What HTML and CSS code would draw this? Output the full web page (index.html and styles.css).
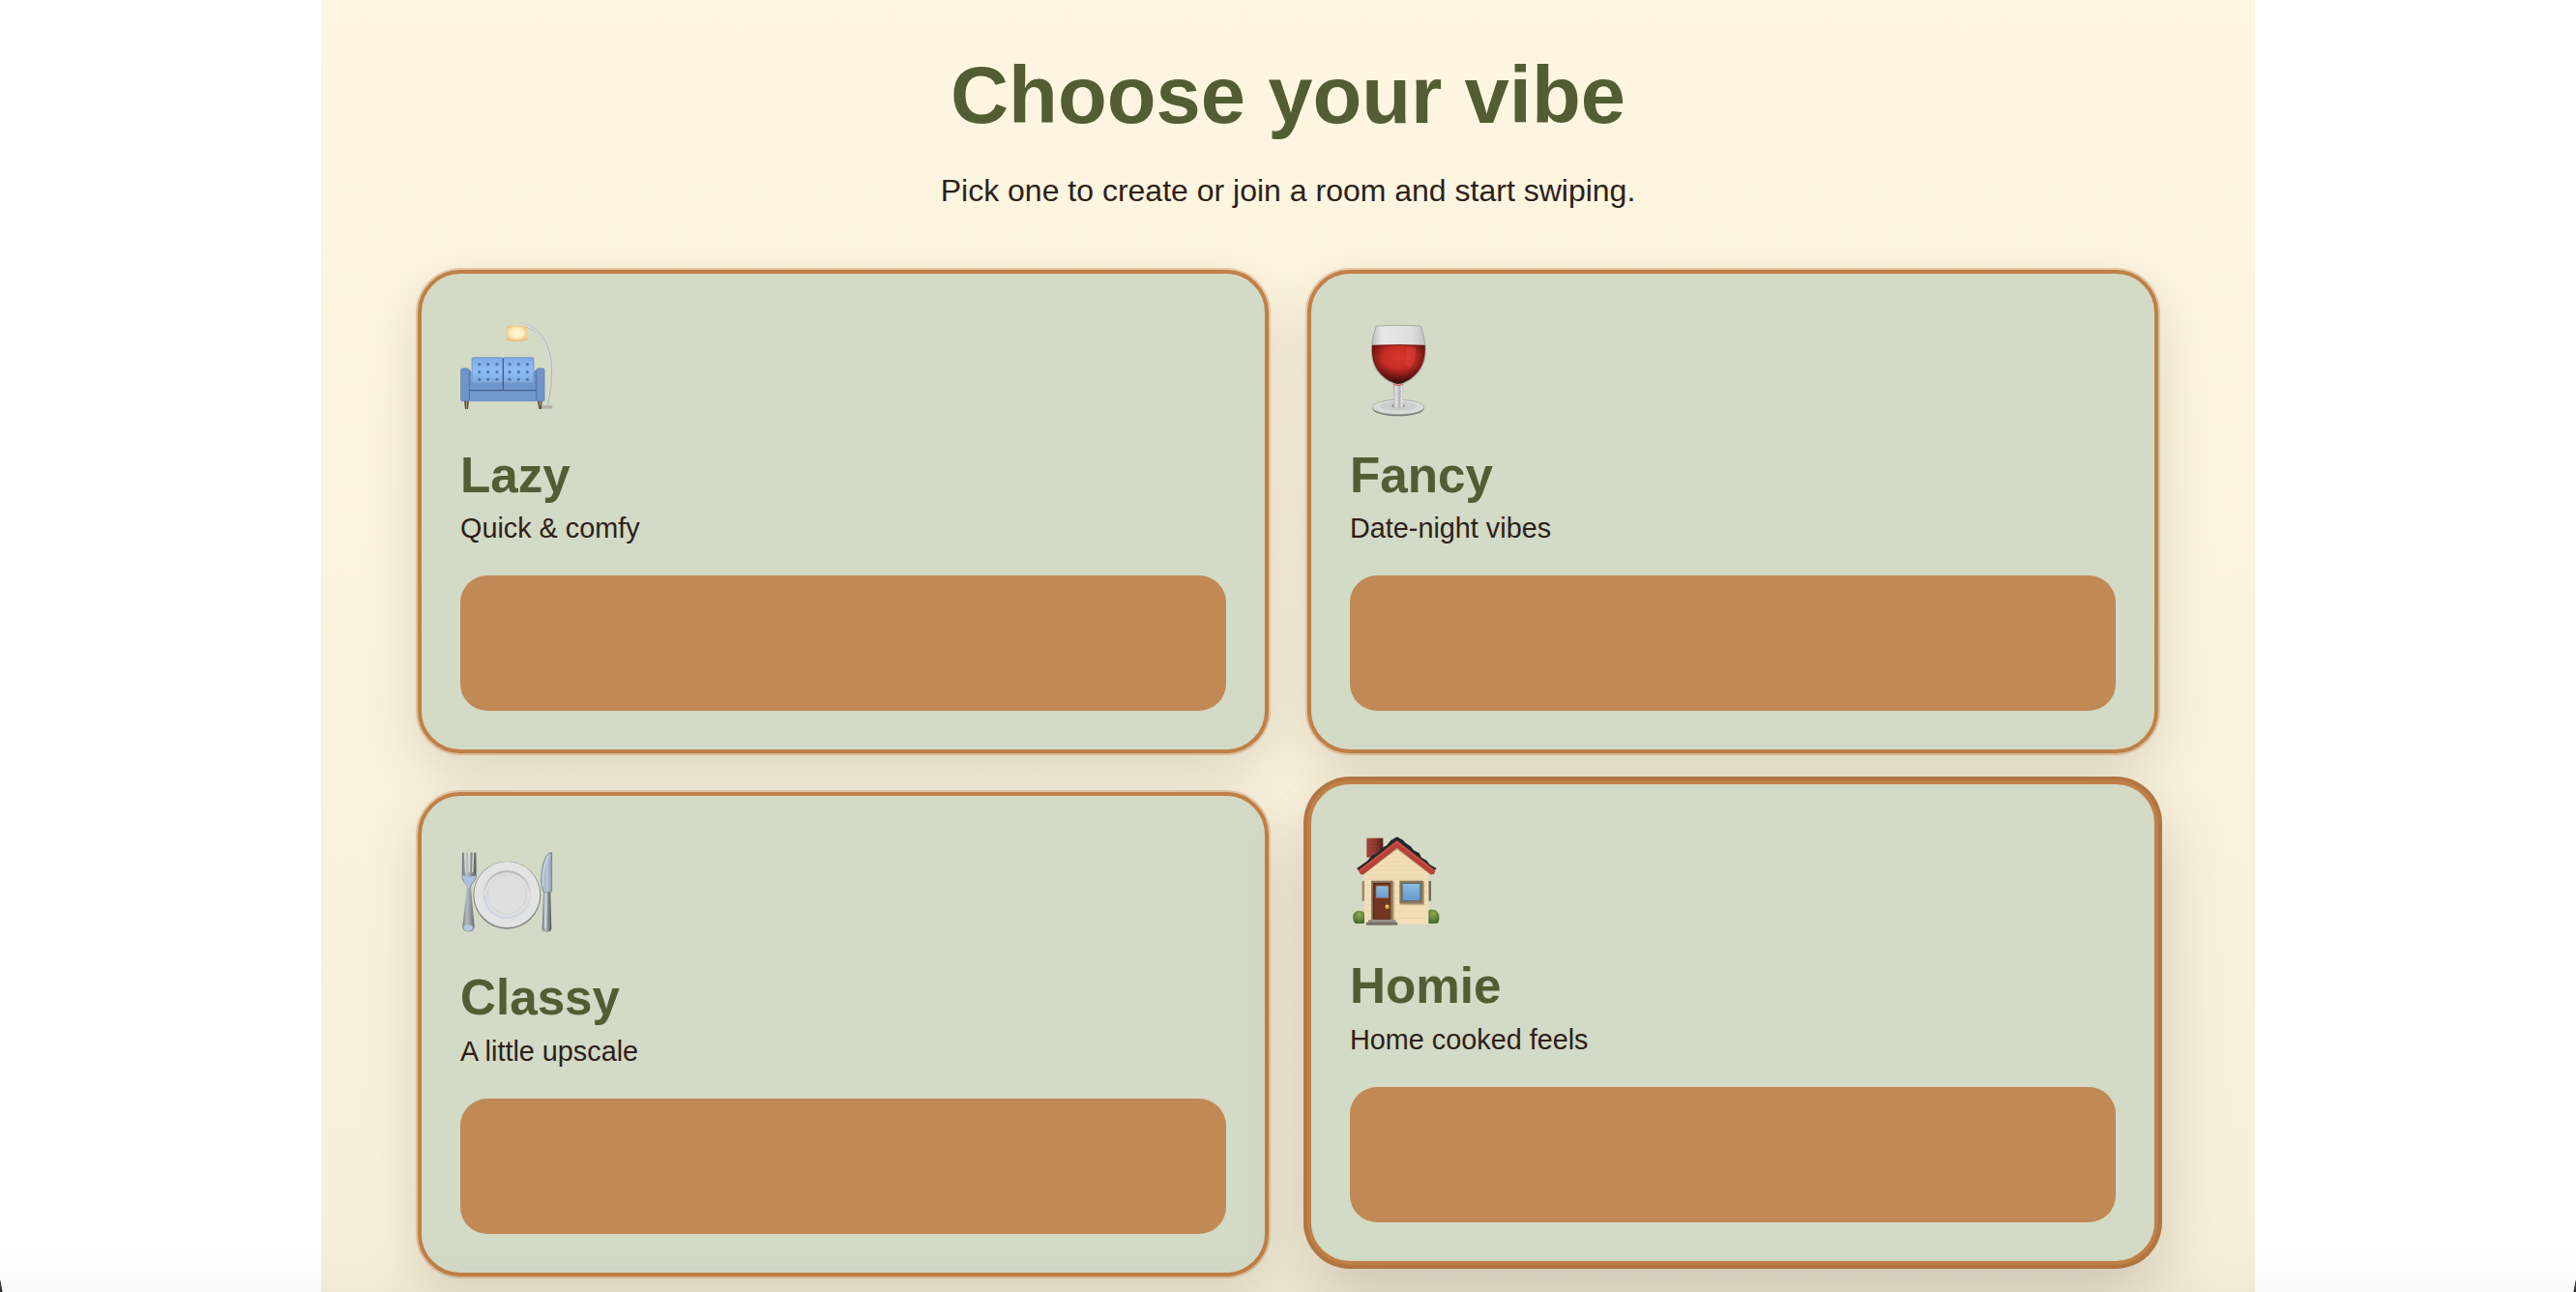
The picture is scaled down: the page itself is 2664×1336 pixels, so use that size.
FILE: index.html
```html
<!DOCTYPE html>
<html lang="en">
<head>
    <meta charset="UTF-8">
    <meta name="viewport" content="width=device-width, initial-scale=1.0">
    <title>Choose your vibe</title>
    <link rel="stylesheet" href="styles.css">
</head>

<body>
    <main class="page">
        <h1 class="title">Choose your vibe</h1>
        <p class="subtitle">Pick one to create or join a room and start swiping.</p>

        <div class="grid">
            <article class="card">
                <svg class="icon" viewBox="48 72 288 288" aria-hidden="true">
                    <defs>
                        <linearGradient id="cushion" x1="0" y1="0" x2="0" y2="1">
                            <stop offset="0" stop-color="#7eabe4"/>
                            <stop offset=".5" stop-color="#8fbdf5"/>
                            <stop offset="1" stop-color="#7ba6de"/>
                        </linearGradient>
                        <radialGradient id="shade">
                            <stop offset="0" stop-color="#fffbd8"/>
                            <stop offset=".6" stop-color="#fdeebb"/>
                            <stop offset="1" stop-color="#f0c98c"/>
                        </radialGradient>
                    </defs>
                    <path d="M225 78C285 74 328 135 329 215C329 265 324 300 314 333" fill="none" stroke="#b3b5b5" stroke-width="8"/>
                    <path d="M225 77C284 73 326 135 327 215C327 265 322 300 312 333" fill="none" stroke="#dcdfdf" stroke-width="5"/>
                    <rect x="296" y="328" width="38" height="10" rx="3" fill="#b7b0aa"/>
                    <path d="M192 81Q223 77 254 81L256 124Q223 132 190 124Z" fill="url(#shade)"/>
                    <path d="M190 120Q223 127 256 120V125Q223 132 190 125Z" fill="#e8bd80"/>
                    <path d="M60 313h6l2 26h-5zM68 313h7l-3 26h-3zM287 313h6l3 26h-4zM296 313h6l-2 26h-4z" fill="#674a3b"/>
                    <rect x="84" y="179" width="97" height="85" rx="5" fill="url(#cushion)" stroke="#6488bd" stroke-width="2"/>
                    <rect x="182" y="179" width="94" height="85" rx="5" fill="url(#cushion)" stroke="#6488bd" stroke-width="2"/>
                    <g fill="#5577ad">
                        <circle cx="107" cy="200" r="5"/><circle cx="134" cy="200" r="5"/><circle cx="162" cy="200" r="5"/>
                        <circle cx="107" cy="224" r="5"/><circle cx="134" cy="224" r="5"/><circle cx="162" cy="224" r="5"/>
                        <circle cx="107" cy="247" r="5"/><circle cx="134" cy="247" r="5"/><circle cx="162" cy="247" r="5"/>
                        <circle cx="201" cy="200" r="5"/><circle cx="229" cy="200" r="5"/><circle cx="256" cy="200" r="5"/>
                        <circle cx="201" cy="224" r="5"/><circle cx="229" cy="224" r="5"/><circle cx="256" cy="224" r="5"/>
                        <circle cx="201" cy="247" r="5"/><circle cx="229" cy="247" r="5"/><circle cx="256" cy="247" r="5"/>
                    </g>
                    <rect x="76" y="255" width="208" height="29" fill="#7095ca"/>
                    <path d="M77 255H180M184 255H282" stroke="#8db4e6" stroke-width="2"/>
                    <path d="M77 281H284M181 181V281" stroke="#425f8e" stroke-width="4"/>
                    <rect x="76" y="284" width="209" height="30" rx="3" fill="#7599cf" stroke="#5c7fb6" stroke-width="2"/>
                    <path d="M50 217Q50 213 55 213H71L81 222V255L76 258V310Q76 314 71 314H54Q50 314 50 310Z" fill="#7095ca" stroke="#5879ad" stroke-width="2"/>
                    <path d="M309 217Q309 213 304 213H289L278 222V255L283 258V310Q283 314 288 314H305Q309 314 309 310Z" fill="#7095ca" stroke="#5879ad" stroke-width="2"/>
                    <path d="M76 221V310M284 221V310" stroke="#5475aa" stroke-width="3"/>
                </svg>
                <h2 class="name">Lazy</h2>
                <p class="desc">Quick &amp; comfy</p>
                <div class="action"></div>
            </article>

            <article class="card">
                <svg class="icon" viewBox="18 42 288 288" aria-hidden="true">
                    <defs>
                        <radialGradient id="wine" cx=".5" cy=".32" r=".66">
                            <stop offset="0" stop-color="#d8382d"/>
                            <stop offset=".45" stop-color="#c42c24"/>
                            <stop offset=".75" stop-color="#741815"/>
                            <stop offset="1" stop-color="#350e0d"/>
                        </radialGradient>
                        <linearGradient id="glass">
                            <stop offset="0" stop-color="#bfc0bf"/>
                            <stop offset=".2" stop-color="#e8e8e8"/>
                            <stop offset=".75" stop-color="#dededf"/>
                            <stop offset="1" stop-color="#c2c2c3"/>
                        </linearGradient>
                        <linearGradient id="stem">
                            <stop offset="0" stop-color="#8e8e8d"/>
                            <stop offset=".3" stop-color="#e6e6e6"/>
                            <stop offset=".6" stop-color="#b3b3b3"/>
                            <stop offset=".8" stop-color="#e8e8e8"/>
                            <stop offset="1" stop-color="#8a8a89"/>
                        </linearGradient>
                    </defs>
                    <ellipse cx="168" cy="307" rx="80" ry="24" fill="#777a75"/>
                    <ellipse cx="168" cy="303" rx="80" ry="23" fill="#d9dbd9" stroke="#9b9d99" stroke-width="2"/>
                    <ellipse cx="168" cy="300" rx="58" ry="14" fill="#cccecc"/>
                    <ellipse cx="168" cy="299" rx="20" ry="7" fill="#8c8c8b"/>
                    <path d="M152 225H184L182 285Q182 300 187 303Q168 309 150 303Q155 298 155 285Z" fill="url(#stem)"/>
                    <path d="M100 51Q168 47 237 51Q247 76 252 112C256 166 236 207 184 230Q168 238 152 230C101 207 82 166 86 112Q90 76 100 51Z" fill="url(#glass)" stroke="#8d8f8b" stroke-width="2"/>
                    <path d="M87 111Q168 108 251 111C255 164 234 206 183 228Q168 234 154 228C102 206 83 164 87 111Z" fill="url(#wine)"/>
                    <path d="M88 112Q168 109 250 112" fill="none" stroke="#7c1a17" stroke-width="3"/>
                    <path d="M195 117H222Q224 155 207 181Q195 180 190 174Z" fill="#ee5144" opacity=".3"/>
                    <path d="M155 230Q168 237 182 230V234Q168 240 155 234Z" fill="#d55"/>
                </svg>
                <h2 class="name">Fancy</h2>
                <p class="desc">Date-night vibes</p>
                <div class="action"></div>
            </article>

            <article class="card">
                <svg class="icon" viewBox="48 27 288 288" aria-hidden="true">
                    <defs>
                        <linearGradient id="metal">
                            <stop offset="0" stop-color="#6e7276"/>
                            <stop offset=".35" stop-color="#b9c0c8"/>
                            <stop offset=".65" stop-color="#8a8d92"/>
                            <stop offset="1" stop-color="#55585c"/>
                        </linearGradient>
                        <linearGradient id="blade">
                            <stop offset="0" stop-color="#a5b3c3"/>
                            <stop offset=".6" stop-color="#b8c5d3"/>
                            <stop offset="1" stop-color="#8798ab"/>
                        </linearGradient>
                        <linearGradient id="rim" x1="0" y1="0" x2="0" y2="1">
                            <stop offset="0" stop-color="#b9b5b2"/>
                            <stop offset=".5" stop-color="#dcdcdd"/>
                            <stop offset="1" stop-color="#c9d3e2"/>
                        </linearGradient>
                    </defs>
                    <circle cx="193" cy="182" r="105" fill="#85888a"/>
                    <circle cx="193" cy="180" r="102" fill="#e4e3e3"/>
                    <circle cx="193" cy="180" r="75" fill="url(#rim)"/>
                    <circle cx="193" cy="181" r="69" fill="#e0e0e1"/>
                    <path d="M121 181A72 72 0 0 0 193 253A72 72 0 0 0 250 225A68 68 0 0 1 127 181Z" fill="#c6d2e6"/>
                    <circle cx="193" cy="180" r="60" fill="#e0dfdf" stroke="#cacacb" stroke-width="2"/>
                    <path d="M54 51Q57 46 60 51L63 112H67L66 51Q69 46 72 51L73 112H78L79 51Q83 46 86 51L84 112H88L91 51Q95 46 97 51L98 127Q94 139 83 150L81 161L92 279Q91 296 73 296Q55 296 55 279L68 161L66 150Q54 139 53 127Z" fill="url(#metal)"/>
                    <path d="M54 121Q75 128 97 121Q96 136 80 149L76 160H72L68 149Q55 138 54 121Z" fill="#acc2df"/>
                    <path d="M73 161L70 219L68 274" fill="none" stroke="#abb2bb" stroke-width="5"/>
                    <ellipse cx="73" cy="283" rx="14" ry="9" fill="#b6c9e2"/>
                    <path d="M332 50C313 45 300 92 299 135Q299 159 306 173H328Q332 173 332 167Z" fill="url(#blade)" stroke="#66727f" stroke-width="2"/>
                    <path d="M326 58C312 70 303 111 304 155" fill="none" stroke="#d9e3ed" stroke-width="3"/>
                    <path d="M306 173H328L331 286Q329 297 316 297Q303 297 302 286Z" fill="url(#metal)"/>
                    <path d="M314 175L312 284" stroke="#c6d2df" stroke-width="7"/>
                </svg>
                <h2 class="name">Classy</h2>
                <p class="desc">A little upscale</p>
                <div class="action"></div>
            </article>

            <article class="card card-active">
                <svg class="icon" viewBox="33 36 288 288" aria-hidden="true">
                    <defs>
                        <linearGradient id="brick">
                            <stop offset="0" stop-color="#a4483d"/>
                            <stop offset=".5" stop-color="#963a31"/>
                            <stop offset="1" stop-color="#571e1b"/>
                        </linearGradient>
                        <linearGradient id="pane" x1="0" y1="0" x2="0" y2="1">
                            <stop offset="0" stop-color="#8bbde2"/>
                            <stop offset="1" stop-color="#6799cf"/>
                        </linearGradient>
                        <radialGradient id="bush" cx=".5" cy=".3" r=".6">
                            <stop offset="0" stop-color="#8dab4f"/>
                            <stop offset="1" stop-color="#4a7232"/>
                        </radialGradient>
                    </defs>
                    <path d="M43 295Q43 275 62 275Q78 275 82 290V315H51Q43 310 43 295Z" fill="url(#bush)"/>
                    <path d="M274 275Q292 267 303 277Q312 286 310 303Q308 315 300 315H274Z" fill="url(#bush)"/>
                    <rect x="71" y="183" width="7" height="62" fill="#9c8665"/>
                    <rect x="277" y="183" width="8" height="62" fill="#766b51"/>
                    <path d="M85 50H136V110H85Z" fill="url(#brick)"/>
                    <path d="M85 60H134M85 70H134M85 80H134M85 90H134" stroke="#7c2f29" stroke-width="1"/>
                    <path d="M78 148L179 78L277 148V317H78Z" fill="#f2dfb8"/>
                    <path d="M166 99H195M151 111H210M132 123H229M116 136H246M80 150H276M80 164H276M80 178H276M80 198H276M80 218H276M80 238H276M80 258H276M80 278H276M80 298H276" stroke="#e6d2a8" stroke-width="2"/>
                    <path d="M68 164L179 82L287 164" fill="none" stroke="#987c5b" stroke-width="5" opacity=".6"/>
                    <path d="M54 144L85 122L105 101L119 96L132 80L147 73L160 57L179 46L198 56L206 65L222 76L231 88L248 96L255 110L271 119L281 132L302 144L293 153L178 66L64 154Z" fill="#23292a"/>
                    <path d="M59 150L179 57L298 150L294 162H284L179 80L76 162H66Z" fill="#b94036"/>
                    <path d="M62 152L179 62L294 152" fill="none" stroke="#cb5045" stroke-width="5"/>
                    <path d="M160 184H171V304H160Z" fill="#c6ad87"/>
                    <rect x="99" y="182" width="67" height="121" fill="#8b735b"/>
                    <rect x="105" y="189" width="54" height="113" fill="#56261c"/>
                    <rect x="108" y="192" width="50" height="109" fill="#713522"/>
                    <rect x="114" y="198" width="39" height="38" fill="url(#pane)" stroke="#a65b37" stroke-width="2"/>
                    <circle cx="149" cy="263" r="7" fill="#d5982b"/>
                    <circle cx="147" cy="261" r="3" fill="#ffe79c"/>
                    <rect x="190" y="185" width="74" height="72" fill="#b9a37d"/>
                    <rect x="187" y="182" width="73" height="71" fill="#8b7859"/>
                    <rect x="193" y="189" width="61" height="57" fill="#5d6a6b"/>
                    <rect x="197" y="192" width="53" height="51" fill="url(#pane)"/>
                    <rect x="90" y="303" width="85" height="9" fill="#979188"/>
                    <rect x="84" y="311" width="97" height="9" fill="#777069"/>
                </svg>
                <h2 class="name">Homie</h2>
                <p class="desc">Home cooked feels</p>
                <div class="action"></div>
            </article>
        </div>
    </main>
    <div class="bottom-shade"></div>
</body>
</html>
```
FILE: styles.css
```css
* {
    box-sizing: border-box;
    margin: 0;
    padding: 0;
}

body {
    font-family: "Liberation Sans", Arial, sans-serif;
    height: 100vh;
    overflow: hidden;
    background: #ffffff;
    color: #2c2119;
}

.page {
    width: 2000px;
    height: 100vh;
    margin: 0 auto;
    padding: 49px 100px 0;
    overflow: hidden;
    background: linear-gradient(180deg, #fef6e0 0%, #f6efd9 100%);
}

.title {
    font-size: 83.2px;
    line-height: 100px;
    text-align: center;
    color: #525d34;
}

.subtitle {
    margin-top: 29px;
    font-size: 32px;
    line-height: 38px;
    text-align: center;
}

.grid {
    display: grid;
    grid-template-columns: 1fr 1fr;
    gap: 40px;
    margin-top: 63px;
}

.card {
    display: flex;
    flex-direction: column;
    height: 500.4px;
    padding: 51px 40px 40px;
    border: 4px solid #c08047;
    border-radius: 44px;
    background: #d3dac5;
    box-shadow: 0 0 0 2px rgba(192, 128, 71, 0.35), 0 20px 60px rgba(0, 0, 0, 0.12);
}

.card-active {
    transform: translateY(-12px);
    box-shadow: 0 0 0 4px #b27642, 0 28px 72px rgba(0, 0, 0, 0.18);
}

.icon {
    width: 96px;
    height: 96px;
    overflow: visible;
}

.name {
    margin-top: 32px;
    font-size: 51.2px;
    line-height: 60px;
    color: #525d34;
}

.desc {
    margin-top: 7.3px;
    font-size: 28.8px;
    line-height: 34px;
}

.action {
    height: 140px;
    margin-top: auto;
    border-radius: 28px;
    background: #c18956;
}

/* soft shade along the bottom of the window, with its rounded corners */
.bottom-shade {
    position: fixed;
    left: 0;
    right: 0;
    bottom: 0;
    height: 46px;
    background:
        linear-gradient(80deg, #333 2px, transparent 3px) left bottom / 3px 12px no-repeat,
        linear-gradient(-80deg, #333 2px, transparent 3px) right bottom / 3px 12px no-repeat,
        linear-gradient(180deg, rgba(0, 0, 0, 0), rgba(0, 0, 0, 0.025));
    pointer-events: none;
}
```
